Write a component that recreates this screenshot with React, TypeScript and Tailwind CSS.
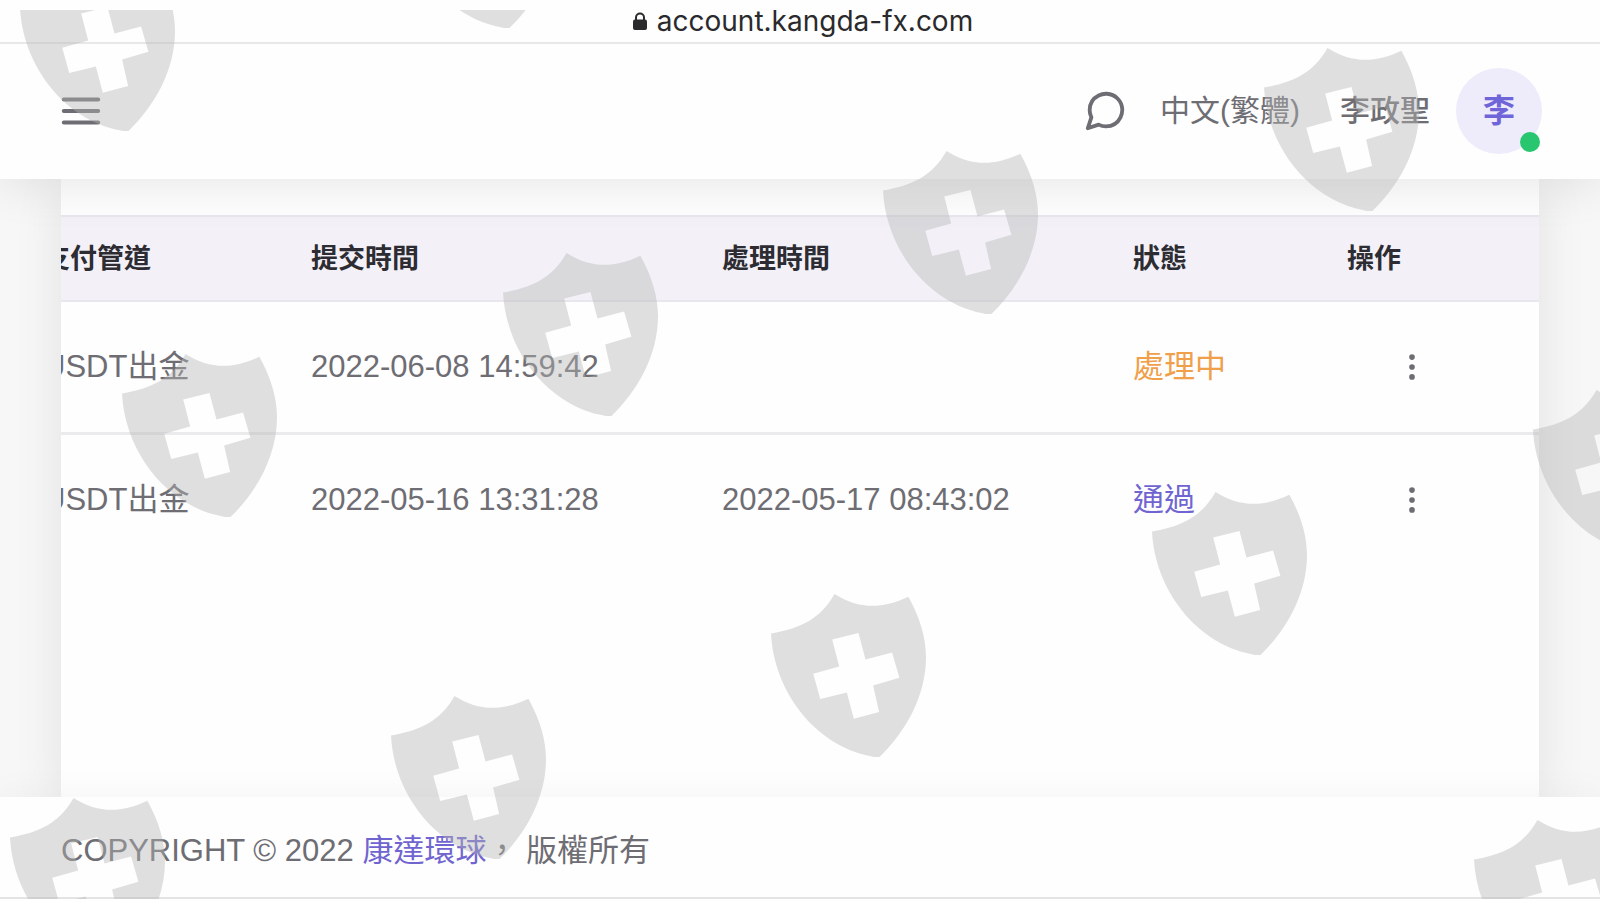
import React from 'react';
import { FiMenu, FiMessageCircle, FiMoreVertical } from 'react-icons/fi';

interface Withdrawal {
  id: number;
  channel: string;
  submittedAt: string;
  processedAt: string;
  status: 'pending' | 'approved';
}

const WITHDRAWALS: Withdrawal[] = [
  { id: 1, channel: 'USDT出金', submittedAt: '2022-06-08 14:59:42', processedAt: '', status: 'pending' },
  { id: 2, channel: 'USDT出金', submittedAt: '2022-05-16 13:31:28', processedAt: '2022-05-17 08:43:02', status: 'approved' },
];

const STATUS = {
  pending: { label: '處理中', className: 'text-[#f0a04b]' },
  approved: { label: '通過', className: 'text-[#7065d0]' },
};

// watermark shields, measured from the top left of the overlay
const SHIELDS = [
  { x: 20, y: -42 },
  { x: 401, y: -145 },
  { x: 1264, y: 38 },
  { x: 883, y: 141 },
  { x: 503, y: 243 },
  { x: 122, y: 344 },
  { x: 1533, y: 380 },
  { x: 1152, y: 482 },
  { x: 771, y: 584 },
  { x: 391, y: 686 },
  { x: 10, y: 788 },
  { x: 1474, y: 810 },
];

function Lock() {
  return (
    <svg viewBox="0 0 14 18" className="w-3.5 h-[18px]" fill="none" aria-hidden="true">
      <rect x="0" y="7.5" width="14" height="10.5" rx="2" fill="#2a2a2c" />
      <path d="M3 8.5V5.5a4 4 0 0 1 8 0v3" stroke="#2a2a2c" strokeWidth="2" />
    </svg>
  );
}

function Watermark() {
  return (
    <div className="absolute inset-x-0 top-2.5 bottom-0 z-30 overflow-hidden pointer-events-none" aria-hidden="true">
      {SHIELDS.map(s => (
        <svg
          key={`${s.x}-${s.y}`}
          viewBox="0 0 466 490"
          className="absolute w-[155px] h-[163px] text-[#b5b5b5]/42"
          style={{ left: s.x, top: s.y }}
          fill="currentColor"
          fillRule="evenodd"
        >
          <path d="M0 119C90 103 148 75 191 0C265 47 335 45 413 8C450 75 466 135 466 190C466 310 400 420 326 490Q316 492 300 488C130 455 8 290 0 119ZM184 137L263 117L284 197L364 176L386 252L307 275L325 355L249 375L228 296L148 316L127 240L205 218Z" />
        </svg>
      ))}
    </div>
  );
}

function Navbar() {
  return (
    <header className="relative z-10 flex items-center justify-between px-[58px] pt-6 pb-[25px] bg-[#fefefe] text-[30px] shadow-[0_8px_48px_rgba(0,0,0,0.09)]">
      <button type="button" aria-label="Menu">
        <FiMenu className="w-[46px] h-[46px]" />
      </button>
      <div className="flex items-center">
        <button type="button" aria-label="Messages" className="mr-8">
          <FiMessageCircle className="w-[46px] h-[46px]" />
        </button>
        <button type="button" className="mr-10">中文(繁體)</button>
        <span className="mr-[26px] font-medium">李政聖</span>
        <a href="#profile" className="relative flex items-center justify-center w-[86px] h-[86px] rounded-full bg-[#eeebfb] text-[32px] font-bold text-[#7065d8]">
          李
          <span className="absolute right-0.5 bottom-0.5 w-5 h-5 rounded-full bg-[#28c76f]" />
        </a>
      </div>
    </header>
  );
}

function WithdrawalTable() {
  return (
    <table className="w-full table-fixed text-left">
      <thead>
        <tr className="h-[85px] bg-[#f3f1f7] border-y-2 border-[#e9e7ee] text-[27px] text-[#2d2c33]">
          <th className="w-[268px] font-bold">支付管道</th>
          <th className="w-[411px] font-bold">提交時間</th>
          <th className="w-[411px] font-bold">處理時間</th>
          <th className="w-[214px] font-bold">狀態</th>
          <th className="font-bold">操作</th>
        </tr>
      </thead>
      <tbody>
        {WITHDRAWALS.map(w => (
          <tr key={w.id} className="h-[132px] border-b-3 border-[#ebebed] last:border-b-0">
            <td>{w.channel}</td>
            <td>{w.submittedAt}</td>
            <td>{w.processedAt}</td>
            <td className={STATUS[w.status].className}>{STATUS[w.status].label}</td>
            <td className="pl-12">
              <button type="button" aria-label="操作" className="block">
                <FiMoreVertical className="w-[34px] h-[34px]" />
              </button>
            </td>
          </tr>
        ))}
      </tbody>
    </table>
  );
}

export default function App() {
  return (
    <div
      lang="zh-Hant"
      className="relative flex flex-col min-h-screen overflow-hidden bg-[#f7f7f7] text-[31px] leading-[44px] text-[#6e6d73] font-['Liberation_Sans','Noto_Sans_CJK_TC',sans-serif]"
    >
      <div className="relative z-20 flex items-center justify-center gap-2.5 h-11 pl-1.5 bg-[#fefefe] border-b-2 border-[#e8e8e8] font-['Inter',sans-serif] text-[28px] text-[#2a2a2c]">
        <Lock />
        <span>account.kangda-fx.com</span>
      </div>

      <Navbar />

      <main className="flex flex-1 px-[61px]">
        <section className="flex-1 min-w-0 pt-9 bg-[#fefefe] shadow-[0_8px_48px_rgba(0,0,0,0.09)]">
          {/* scrolled to the right, so the first column runs under the edge */}
          <div className="overflow-hidden">
            <div className="-ml-[18px]">
              <WithdrawalTable />
            </div>
          </div>
        </section>
      </main>

      <footer className="relative z-10 px-[61px] pt-8 pb-6 bg-[#fefefe] border-b-2 border-[#e4e4e4] shadow-[0_-4px_32px_rgba(0,0,0,0.04)]">
        COPYRIGHT © 2022{' '}
        <a href="#home" className="text-[#7065d0]">康達環球</a>
        ， 版權所有
      </footer>

      <Watermark />
    </div>
  );
}
